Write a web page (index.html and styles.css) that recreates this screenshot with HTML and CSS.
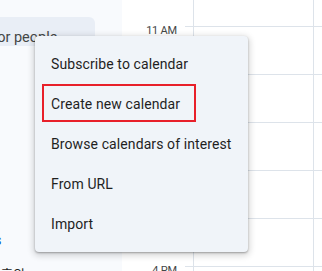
FILE: index.html
```html
<!DOCTYPE html>
<html lang="en">
<head>
  <meta charset="UTF-8">
  <title>Other calendars menu</title>
  <meta name="viewport" content="width=device-width, initial-scale=1.0">
  <link rel="stylesheet" href="styles.css">
</head>
<body>

  <div class="app">
    <aside class="sidebar">
      <div class="side-top">Booking pages today only</div>
      <div class="people">
        <span class="people-text">Search for people</span>
      </div>
      <div class="side-link">Other calendars</div>
      <div class="side-ko">이후의</div>
    </aside>

    <section class="week">
      <div class="hour"><span class="hour-label">10 AM</span><span class="tick"></span><span class="day"></span><span class="day"></span></div>
      <div class="hour"><span class="hour-label">11 AM</span><span class="tick"></span><span class="day"></span><span class="day"></span></div>
      <div class="hour"><span class="hour-label">12 PM</span><span class="tick"></span><span class="day"></span><span class="day"></span></div>
      <div class="hour"><span class="hour-label">1 PM</span><span class="tick"></span><span class="day"></span><span class="day"></span></div>
      <div class="hour"><span class="hour-label">2 PM</span><span class="tick"></span><span class="day"></span><span class="day"></span></div>
      <div class="hour"><span class="hour-label">3 PM</span><span class="tick"></span><span class="day"></span><span class="day"></span></div>
      <div class="hour"><span class="hour-label">4 PM</span><span class="tick"></span><span class="day"></span><span class="day"></span></div>
    </section>

    <ul class="menu">
      <li class="menu-item">Subscribe to calendar</li>
      <li class="menu-item">Create new calendar</li>
      <li class="menu-item">Browse calendars of interest</li>
      <li class="menu-item">From URL</li>
      <li class="menu-item">Import</li>
    </ul>

    <div class="highlight"></div>
  </div>

</body>
</html>
```

FILE: styles.css
```css
* {
  box-sizing: border-box;
}

body {
  margin: 0;
  font-family: Roboto, 'Liberation Sans', sans-serif;
  background: #fff;
  overflow: hidden;
}

.app {
  position: relative;
  display: flex;
  width: 322px;
  height: 271px;
  overflow: hidden;
}

/* left column */
.sidebar {
  width: 122px;
  flex-shrink: 0;
  background-color: #f8fafd;
  overflow: hidden;
  display: flex;
  flex-direction: column;
}

.side-top {
  margin: -19px 0 0 -8px;
  height: 20px;
  line-height: 20px;
  font-size: 14px;
  color: #1f1f1f;
  white-space: nowrap;
}

.people {
  margin: 16px 0 0 -64px;
  width: 159px;
  height: 38px;
  display: flex;
  align-items: center;
  padding: 12px 0 0 8px;
  background-color: #e9eef6;
  border-radius: 6px;
}

.people-text {
  font-size: 14.5px;
  color: #444746;
  white-space: nowrap;
}

.side-link {
  margin: 184px 0 0 -97px;
  height: 20px;
  line-height: 20px;
  font-size: 14px;
  color: #0b57d0;
  white-space: nowrap;
}

.side-ko {
  margin: 15px 0 0 -11px;
  font-family: 'Noto Sans CJK KR', sans-serif;
  font-size: 13px;
  line-height: 18px;
  color: #1f1f1f;
  white-space: nowrap;
}

/* day grid */
.week {
  flex: 1;
  margin-top: -22px;
  display: flex;
  flex-direction: column;
}

.hour {
  display: grid;
  grid-template-columns: 63px 8px 120px 1fr;
  height: 48px;
  flex-shrink: 0;
}

.hour-label {
  margin-top: -2px;
  padding-right: 8px;
  text-align: right;
  font-size: 11px;
  line-height: 14px;
  letter-spacing: -0.2px;
  color: #444746;
  white-space: nowrap;
}

.tick,
.day {
  border-top: 1px solid #dde3ea;
}

.day {
  border-left: 1px solid #dde3ea;
}

/* popup menu */
.menu {
  position: absolute;
  left: 35px;
  top: 36px;
  width: 213px;
  margin: 0;
  padding: 8px 0;
  list-style: none;
  background-color: #f0f4f9;
  border-radius: 4px;
  box-shadow: 0 1px 2px rgba(0, 0, 0, 0.3), 0 2px 6px 2px rgba(0, 0, 0, 0.15);
}

.menu-item {
  height: 40px;
  line-height: 40px;
  padding-left: 16px;
  font-size: 14px;
  letter-spacing: 0.1px;
  color: #1f1f1f;
  white-space: nowrap;
}

.highlight {
  position: absolute;
  left: 42px;
  top: 84px;
  width: 154px;
  height: 38px;
  border: 2px solid #e8202a;
}
```
